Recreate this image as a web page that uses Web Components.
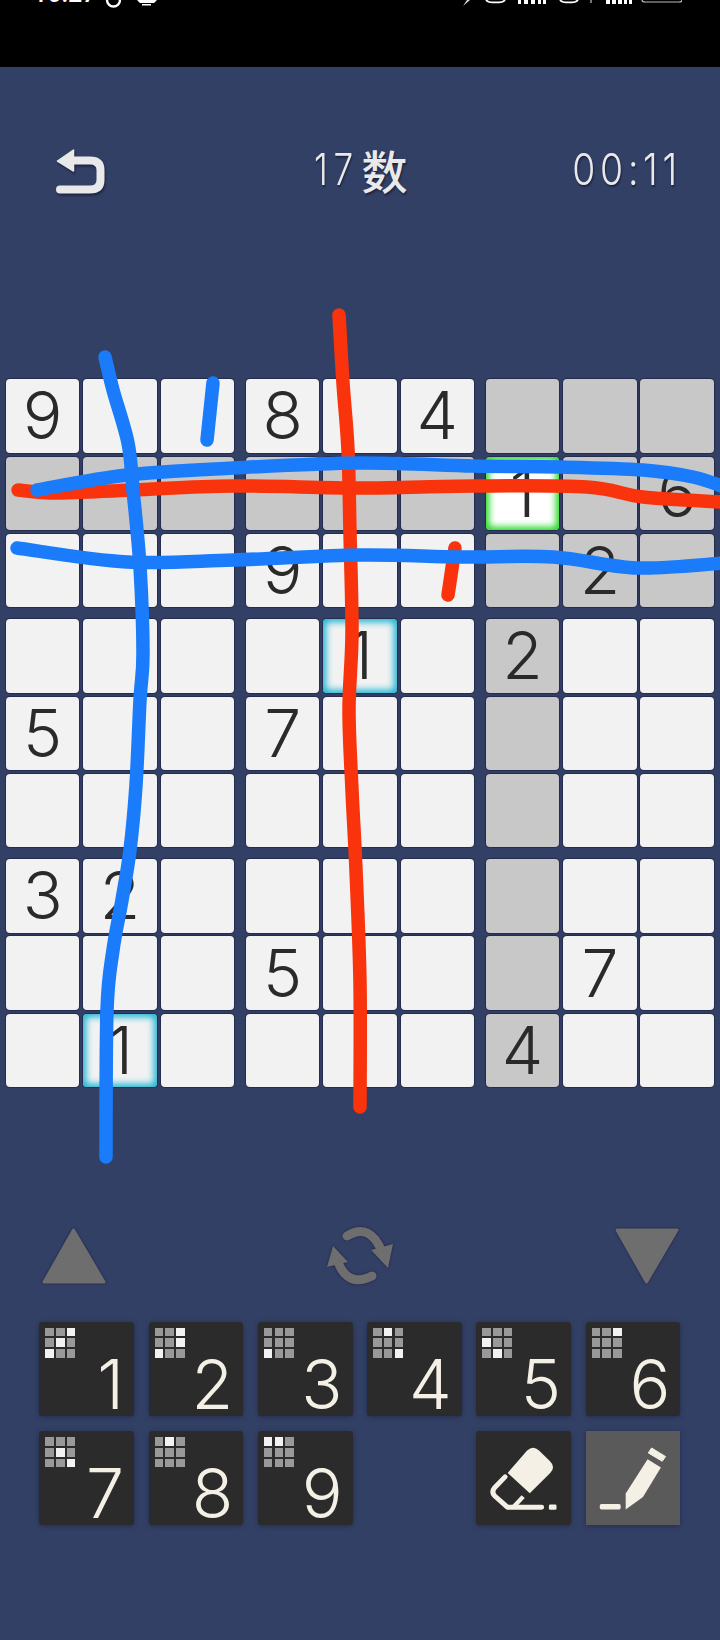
<!DOCTYPE html>
<html lang="zh">
<head>
<meta charset="utf-8">
<title>17数</title>
<style>
  html, body { margin: 0; padding: 0; background: #334066; }
  game-screen { width: 720px; height: 1640px; }
</style>
</head>
<body>
<game-screen>
  <status-bar></status-bar>
  <game-header title-text="17数" time="00:11"></game-header>
  <sudoku-board></sudoku-board>
  <tool-row></tool-row>
  <key-pad></key-pad>
  <ink-layer></ink-layer>
</game-screen>

<script>
const DIGIT_FONT = 'Inter, "Noto Sans CJK SC", sans-serif';

class GameScreen extends HTMLElement {
  constructor() {
    super();
    this.attachShadow({ mode: 'open' });
    this.shadowRoot.innerHTML = `
      <style>
        :host { display: flex; flex-direction: column; position: relative; overflow: hidden; background: #334066; }
      </style>
      <slot></slot>`;
  }
}

class StatusBar extends HTMLElement {
  constructor() {
    super();
    this.attachShadow({ mode: 'open' });
    this.shadowRoot.innerHTML = `
      <style>
        :host { display: block; height: 66.6px; background: #000; overflow: hidden; flex: none; }
        .row { display: flex; justify-content: space-between; height: 8px; padding: 0 38px 0 33px; }
        .time { font: 500 25px/25px Roboto, sans-serif; color: #fff; margin-top: -19px; }
        .left { display: flex; gap: 7px; }
        svg { display: block; }
      </style>
      <div class="row">
        <div class="left">
          <span class="time">10:27</span>
          <svg width="60" height="8" viewBox="0 0 60 8">
            <path d="M4 0a6.500 6.500 0 0 0 13 0" fill="none" stroke="#fff" stroke-width="2.4"/>
            <path d="M34 0h20l-3 3h-14z M39 4h9v1.600h-9z" fill="#fff"/>
          </svg>
        </div>
        <svg width="222" height="8" viewBox="460 0 222 8">
          <path d="M470 0l-7 6 4-6z" fill="#ddd"/>
          <path d="M486 0q2 2.4 6 2.4h7q4 0 6-2.4" fill="none" stroke="#fff" stroke-width="1.8"/>
          <path d="M518 0h3v4h-3zM524 0h4v4h-4zM531 0h4v4h-4zM538 0h3v4h-3zM543 0h3v4h-3z" fill="#fff"/>
          <path d="M560 0q2 2.4 6 2.4h6q4 0 6-2.4" fill="none" stroke="#fff" stroke-width="1.8"/>
          <path d="M590 0h2v3h-2z" fill="#777"/>
          <path d="M606 0h4v4h-4zM612 0h4v4h-4zM618 0h4v4h-4zM624 0h3v4h-3zM629 0h3v4h-3z" fill="#fff"/>
          <path d="M642 0q0 2 3 2h34q3 0 3-2" fill="none" stroke="#bbb" stroke-width="1.2"/>
        </svg>
      </div>`;
  }
}

class GameHeader extends HTMLElement {
  connectedCallback() {
    if (this.shadowRoot) return;
    this.attachShadow({ mode: 'open' });
    this.shadowRoot.innerHTML = `
      <style>
        :host {
          display: grid; grid-template-columns: 1fr auto 1fr; align-items: center; flex: none;
          height: 80px; margin-top: 62px; padding: 0 38px 0 56px;
          font-family: ${DIGIT_FONT}; color: #e9e9e9;
          text-shadow: 1px 2px 2px #1c2340;
        }
        svg { display: block; margin-top: 6px; filter: drop-shadow(1px 2px 1px #1c2340); }
        .title { display: flex; align-items: center; font-size: 44px; font-weight: 300; line-height: 80px; margin-left: -17px; }
        .title span { display: inline-block; width: 48px; letter-spacing: 7px; transform: scaleX(.8); transform-origin: left; white-space: nowrap; }
        .title b { font: 500 46px/80px "Noto Sans CJK SC", sans-serif; }
        .time { justify-self: end; font-size: 44px; font-weight: 300; line-height: 80px; letter-spacing: 5.500px; transform: scaleX(.85); transform-origin: right; white-space: nowrap; }
      </style>
      <svg width="50" height="46" viewBox="56 151 50 46">
        <path d="M68 162.5H90Q100.500 162.500 100.500 172V182Q100.500 191.500 90 191.500H60" fill="none" stroke="#e9e9e9" stroke-width="8" stroke-linecap="round"/>
        <path d="M57.500 163L73.500 152V173Z" fill="#e9e9e9" stroke="#e9e9e9" stroke-width="1.5" stroke-linejoin="round"/>
      </svg>
      <div class="title"><span>17</span><b>数</b></div>
      <div class="time">00:11</div>`;
  }
}

const PUZZLE = [
  '9..8.4...',
  '......1.6',
  '...9...2.',
  '....1.2..',
  '5..7.....',
  '.........',
  '32.......',
  '...5...7.',
  '.1....4..'
];

const cellTemplate = document.createElement('template');
cellTemplate.innerHTML = `
  <style>
    :host {
      display: flex; align-items: center; justify-content: center;
      height: 73.4px; border-radius: 4px;
      background: #f2f2f2; color: #2a2a2a;
      box-shadow: 0 0 1px 1px #232c4c;
      font: 300 66px/73px ${DIGIT_FONT};
    }
    :host([tone="grey"]) { background: #c8c8c8; }
    :host([tone="green"]) { background: #fff; box-shadow: 0 0 1px 1px #232c4c, inset 0 0 7px 3px #1ed81e; }
    :host([tone="blue"]) { box-shadow: 0 0 1px 1px #232c4c, inset 0 0 7px 3px #17b3d2; }
  </style>
  <slot></slot>`;

class SudokuCell extends HTMLElement {
  constructor() {
    super();
    this.attachShadow({ mode: 'open' });
    this.shadowRoot.appendChild(cellTemplate.content.cloneNode(true));
  }
}

class SudokuBoard extends HTMLElement {
  constructor() {
    super();
    this.attachShadow({ mode: 'open' });
    this.shadowRoot.innerHTML = `
      <style>
        :host { display: grid; grid-template-columns: repeat(3, auto); justify-content: start; gap: 12px; flex: none; margin: 170.700px 0 0 6px; }
        .block { display: grid; grid-template-columns: repeat(3, 73.4px); gap: 3.9px; }
      </style>`;
    for (let by = 0; by < 3; by++) {
      for (let bx = 0; bx < 3; bx++) {
        const block = document.createElement('div');
        block.className = 'block';
        for (let y = by * 3; y < by * 3 + 3; y++) {
          for (let x = bx * 3; x < bx * 3 + 3; x++) {
            const cell = document.createElement('sudoku-cell');
            const ch = PUZZLE[y][x];
            if (ch !== '.') cell.textContent = ch;
            const grey = y === 1 || x === 6 || (by === 0 && bx === 2);
            if (grey) cell.setAttribute('tone', 'grey');
            if (y === 1 && x === 6) cell.setAttribute('tone', 'green');
            if ((y === 3 && x === 4) || (y === 8 && x === 1)) cell.setAttribute('tone', 'blue');
            block.appendChild(cell);
          }
        }
        this.shadowRoot.appendChild(block);
      }
    }
  }
}

class ToolRow extends HTMLElement {
  constructor() {
    super();
    this.attachShadow({ mode: 'open' });
    this.shadowRoot.innerHTML = `
      <style>
        :host { display: flex; justify-content: space-between; align-items: center; flex: none; height: 60px; margin-top: 139px; padding: 0 40px 0 40px; }
        svg { display: block; filter: drop-shadow(0 0 1.500px #1c2340); }
      </style>
      <svg width="66" height="60" viewBox="39 1226 66 60">
        <path d="M72.500 1230L103 1282H43Z" fill="#6e6e6e" stroke="#6e6e6e" stroke-width="3" stroke-linejoin="round"/>
      </svg>
      <svg width="72" height="60" viewBox="14 16 72 60" style="margin-left:0">
        <path d="M37 26Q60 12 72 42" fill="none" stroke="#6e6e6e" stroke-width="9" stroke-linecap="round"/>
        <path d="M61 40L83 34L78 58Z" fill="#6e6e6e"/>
        <path d="M62 66Q38 78 28 52" fill="none" stroke="#6e6e6e" stroke-width="9" stroke-linecap="round"/>
        <path d="M17 57L23 36L38 52Z" fill="#6e6e6e"/>
      </svg>
      <svg width="66" height="60" viewBox="614 1226 66 60">
        <path d="M646.500 1282L677 1230H617Z" fill="#6e6e6e" stroke="#6e6e6e" stroke-width="3" stroke-linejoin="round"/>
      </svg>`;
  }
}

class KeyButton extends HTMLElement {
  connectedCallback() {
    if (this.shadowRoot) return;
    this.attachShadow({ mode: 'open' });
    const lit = (this.getAttribute('lit') || '').split(',');
    let dots = '';
    for (let i = 0; i < 9; i++) dots += `<i class="${lit.includes(String(i)) ? 'on' : ''}"></i>`;
    this.shadowRoot.innerHTML = `
      <style>
        :host {
          display: flex; justify-content: flex-end; align-items: flex-end; position: relative;
          height: 94px; box-sizing: border-box; padding: 0 10px 0 0; border-radius: 3px;
          background: #2b2b2b; color: #f5f0e6;
          box-shadow: 0 1px 5px #232c4c;
          font: 300 68px/64px ${DIGIT_FONT};
        }
        :host([flat]) { background: #5a5a5a; border-radius: 0; }
        .mini { position: absolute; left: 6px; top: 6px; display: grid; grid-template-columns: repeat(3, 8.600px); gap: 2.100px; }
        .mini i { height: 8.600px; background: #999; }
        .mini i.on { background: #f2f2f2; }
        :host([icon]) { padding: 0; }
        :host([icon]) .mini { display: none; }
        ::slotted(svg) { display: block; }
      </style>
      <div class="mini">${dots}</div>
      <slot></slot>`;
  }
}

class KeyPad extends HTMLElement {
  constructor() {
    super();
    this.attachShadow({ mode: 'open' });
    this.shadowRoot.innerHTML = `
      <style>
        :host { display: grid; grid-template-columns: repeat(6, 94.700px); gap: 15.600px 14.600px; flex: none; margin: 35.500px 0 0 39.300px; }
        .blank { height: 94px; }
      </style>
      <key-button lit="2,4,6">1</key-button>
      <key-button lit="2,5,6">2</key-button>
      <key-button lit="6">3</key-button>
      <key-button lit="1,8">4</key-button>
      <key-button lit="3,7">5</key-button>
      <key-button lit="2">6</key-button>
      <key-button lit="4,8">7</key-button>
      <key-button lit="1">8</key-button>
      <key-button lit="0,1">9</key-button>
      <div class="blank"></div>
      <key-button icon>
        <svg width="94" height="93" viewBox="350 697 285 280">
          <path d="M502 752Q520 735 538 752L570 783Q590 802 572 820L510 882L443 820Z" fill="#f5f0e6"/>
          <path d="M435 832L404 864Q392 878 404 890L442 924H546" fill="none" stroke="#f5f0e6" stroke-width="15" stroke-linecap="round" stroke-linejoin="round"/>
          <path d="M490 892L462 922" fill="none" stroke="#f5f0e6" stroke-width="13"/>
          <rect x="568" y="916" width="23" height="16" rx="4" fill="#f5f0e6"/>
        </svg>
      </key-button>
      <key-button icon flat>
        <svg width="94" height="93" viewBox="680 697 280 280">
          <path d="M864 779L904 804L850 893L798 930V882Z" fill="#f5f0e6"/>
          <path d="M876 745L918 771L908 785L866 760Z" fill="#f5f0e6" stroke="#f5f0e6" stroke-width="3" stroke-linejoin="round"/>
          <rect x="720" y="914" width="63" height="16" rx="5" fill="#f5f0e6"/>
        </svg>
      </key-button>`;
  }
}

// hand-drawn marks, all coordinates are page pixels
const STROKES = [
  ['#f9330b', [[18, 490], [57, 493], [133, 490], [233, 486], [360, 488], [473, 486], [587, 487], [643, 497], [722, 502]]],
  ['#f9330b', [[339, 315], [343, 383], [348, 450], [350, 533], [352, 633], [349, 710], [352, 790], [356, 870], [360, 983], [360, 1107]]],
  ['#f9330b', [[455, 548], [448, 595]]],
  ['#1a7bfb', [[37, 490], [127, 475], [233, 468], [360, 463], [473, 466], [560, 467], [643, 470], [693, 477], [724, 487]]],
  ['#1a7bfb', [[17, 548], [127, 562], [233, 560], [360, 555], [460, 557], [553, 557], [637, 568], [724, 563]]],
  ['#1a7bfb', [[105, 357], [113, 390], [128, 443], [133, 490], [140, 567], [143, 654], [140, 700], [136, 785], [130, 850], [122, 900], [113, 950], [107, 1010], [106, 1157]]],
  ['#1a7bfb', [[213, 383], [207, 440]]]
];

function smoothPath(points) {
  let d = `M${points[0][0]} ${points[0][1]}`;
  for (let i = 0; i < points.length - 1; i++) {
    const p0 = points[i - 1] || points[i];
    const p1 = points[i];
    const p2 = points[i + 1];
    const p3 = points[i + 2] || p2;
    const c1x = p1[0] + (p2[0] - p0[0]) / 6;
    const c1y = p1[1] + (p2[1] - p0[1]) / 6;
    const c2x = p2[0] - (p3[0] - p1[0]) / 6;
    const c2y = p2[1] - (p3[1] - p1[1]) / 6;
    d += `C${c1x} ${c1y} ${c2x} ${c2y} ${p2[0]} ${p2[1]}`;
  }
  return d;
}

class InkLayer extends HTMLElement {
  constructor() {
    super();
    this.attachShadow({ mode: 'open' });
    const paths = STROKES.map(([color, pts]) =>
      `<path d="${smoothPath(pts)}" stroke="${color}"/>`).join('');
    this.shadowRoot.innerHTML = `
      <style>
        :host { position: absolute; inset: 0; pointer-events: none; }
        svg { display: block; }
        path { fill: none; stroke-width: 13.500; stroke-linecap: round; stroke-linejoin: round; }
      </style>
      <svg width="720" height="1640" viewBox="0 0 720 1640">${paths}</svg>`;
  }
}

customElements.define('game-screen', GameScreen);
customElements.define('status-bar', StatusBar);
customElements.define('game-header', GameHeader);
customElements.define('sudoku-cell', SudokuCell);
customElements.define('sudoku-board', SudokuBoard);
customElements.define('tool-row', ToolRow);
customElements.define('key-button', KeyButton);
customElements.define('key-pad', KeyPad);
customElements.define('ink-layer', InkLayer);
</script>
</body>
</html>
